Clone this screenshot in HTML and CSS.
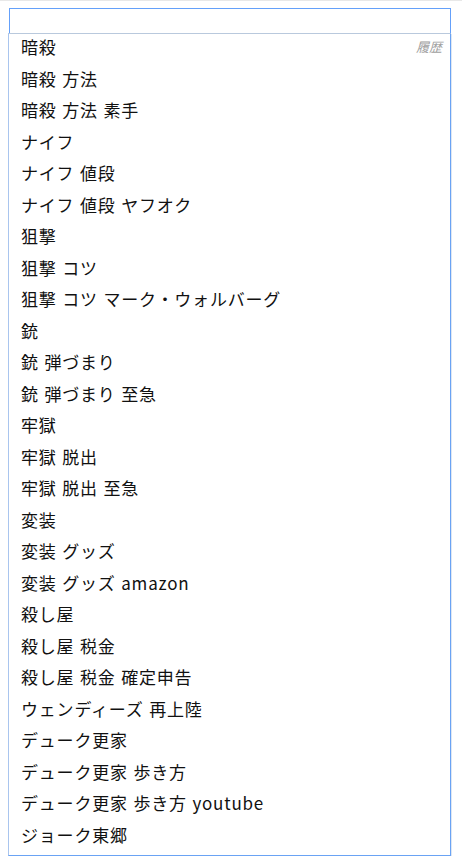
FILE: index.html
```html
<!DOCTYPE html>
<html lang="ja">
<head>
<meta charset="utf-8">
<title>検索</title>
<link rel="stylesheet" href="styles.css">
</head>
<body>
<div class="search">
  <input class="search-input" type="text">
  <ul class="suggest">
    <li class="item"><span>暗殺</span><span class="hist">履歴</span></li>
    <li class="item">暗殺 方法</li>
    <li class="item">暗殺 方法 素手</li>
    <li class="item">ナイフ</li>
    <li class="item">ナイフ 値段</li>
    <li class="item">ナイフ 値段 ヤフオク</li>
    <li class="item">狙撃</li>
    <li class="item">狙撃 コツ</li>
    <li class="item">狙撃 コツ マーク・ウォルバーグ</li>
    <li class="item">銃</li>
    <li class="item">銃 弾づまり</li>
    <li class="item">銃 弾づまり 至急</li>
    <li class="item">牢獄</li>
    <li class="item">牢獄 脱出</li>
    <li class="item">牢獄 脱出 至急</li>
    <li class="item">変装</li>
    <li class="item">変装 グッズ</li>
    <li class="item">変装 グッズ amazon</li>
    <li class="item">殺し屋</li>
    <li class="item">殺し屋 税金</li>
    <li class="item">殺し屋 税金 確定申告</li>
    <li class="item">ウェンディーズ 再上陸</li>
    <li class="item">デューク更家</li>
    <li class="item">デューク更家 歩き方</li>
    <li class="item">デューク更家 歩き方 youtube</li>
    <li class="item">ジョーク東郷</li>
  </ul>
</div>
</body>
</html>
```
FILE: styles.css
```css
html {
  border-top: 1px solid #e8e8e8;
  background: #fff;
}
body {
  margin: 7px 8px 8px 8px;
  font-family: "Noto Sans CJK JP", "Noto Sans", sans-serif;
  color: #111;
}
.search {
  width: 443px;
  display: flex;
  flex-direction: column;
}
.search-input {
  box-sizing: border-box;
  margin: 0 0 0 1px;
  width: 442px;
  height: 25px;
  border: 1px solid #64a0fa;
  border-bottom: none;
  outline: none;
  padding: 0 4px;
  background: #fff;
}
.suggest {
  list-style: none;
  margin: 0;
  padding: 0 0 2px 0;
  border-top: 1px solid #b9c9dd;
  border-left: 1px solid #a9c5ee;
  border-right: 1px solid #6aa3f4;
  border-bottom: 1px solid #6aa3f4;
  box-shadow: 1px 1px 0 #dfe7f1;
  width: 441px;
}
.item {
  box-sizing: border-box;
  display: flex;
  justify-content: space-between;
  align-items: center;
  height: 31.5px;
  padding: 0 8px 6px 12px;
  font-size: 17px;
  letter-spacing: 0.8px;
  word-spacing: 1px;
  line-height: 1;
  white-space: nowrap;
}
.hist {
  font-size: 13px;
  letter-spacing: 0;
  color: #a0a0a0;
  font-style: italic;
}
```
